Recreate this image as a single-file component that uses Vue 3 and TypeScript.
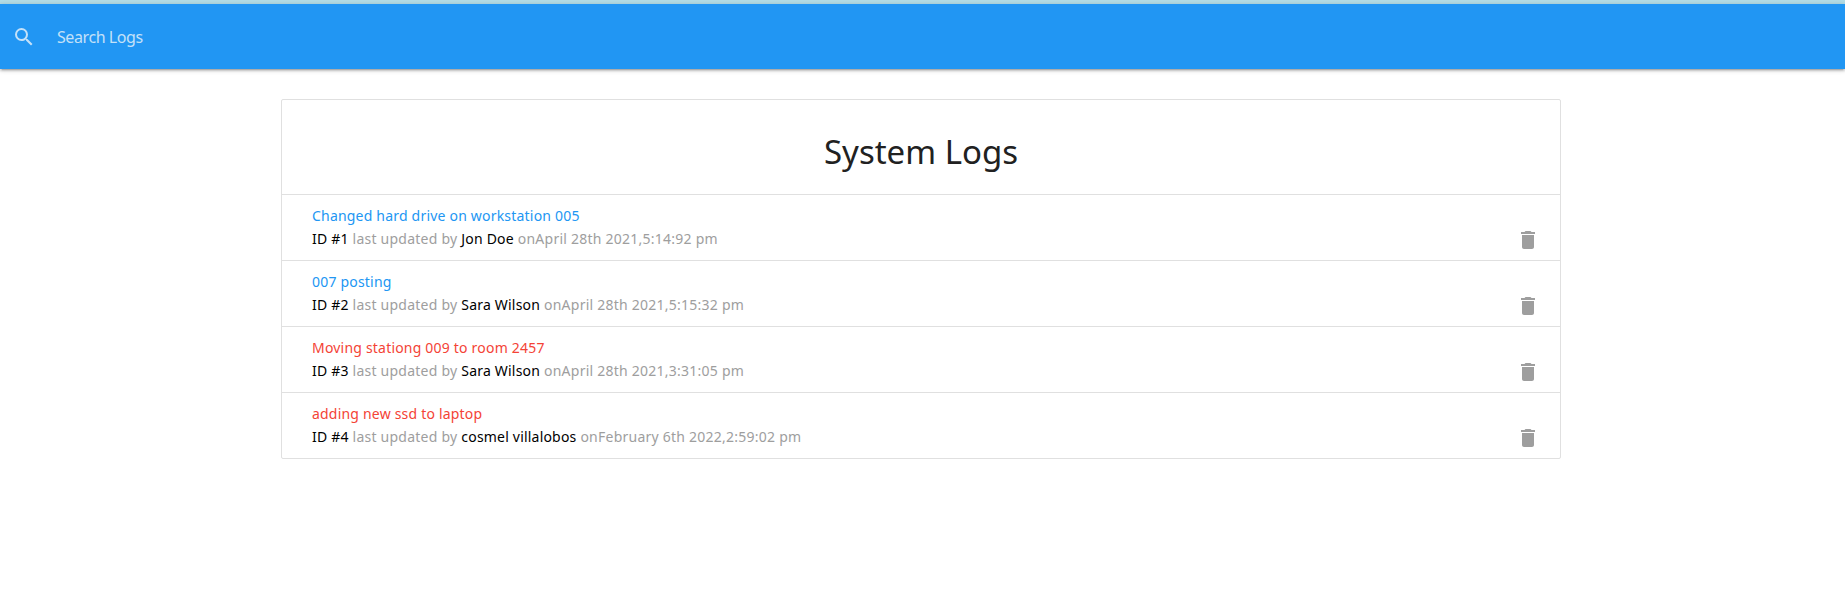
<script setup lang="ts">
interface Log { id: number; msg: string; attention: boolean; tech: string; date: string }
const logs: Log[] = [
  { id: 1, msg: 'Changed hard drive on workstation 005', attention: false, tech: 'Jon Doe', date: 'April 28th 2021,5:14:92 pm' },
  { id: 2, msg: '007 posting', attention: false, tech: 'Sara Wilson', date: 'April 28th 2021,5:15:32 pm' },
  { id: 3, msg: 'Moving stationg 009 to room 2457', attention: true, tech: 'Sara Wilson', date: 'April 28th 2021,3:31:05 pm' },
  { id: 4, msg: 'adding new ssd to laptop', attention: true, tech: 'cosmel villalobos', date: 'February 6th 2022,2:59:02 pm' },
]
</script>

<template>
  <div class="page">
    <div class="progress"></div>
    <nav class="nav">
      <svg class="search-icon" viewBox="0 0 24 24" width="24" height="24" aria-hidden="true">
        <path fill="currentColor" d="M15.5 14h-.79l-.28-.27A6.47 6.47 0 0 0 16 9.5 6.5 6.5 0 1 0 9.5 16c1.61 0 3.09-.59 4.23-1.57l.27.28v.79l5 4.99L20.49 19l-4.99-5zm-6 0C7.01 14 5 11.99 5 9.5S7.01 5 9.5 5 14 7.01 14 9.5 11.99 14 9.5 14z"/>
      </svg>
      <span class="search-text">Search Logs</span>
    </nav>
    <ul class="collection">
      <li class="header"><h4>System Logs</h4></li>
      <li v-for="log in logs" :key="log.id" class="item">
        <div class="text">
          <a class="title" :class="{ red: log.attention }">{{ log.msg }}</a>
          <div class="meta">
            <span class="dark">ID #{{ log.id }}</span> last updated by
            <span class="dark">{{ log.tech }}</span> on{{ log.date }}
          </div>
        </div>
        <svg class="trash" viewBox="0 0 24 24" width="24" height="24" aria-hidden="true">
          <path fill="currentColor" d="M6 19c0 1.1.9 2 2 2h8c1.1 0 2-.9 2-2V7H6v12zM19 4h-3.5l-1-1h-5l-1 1H5v2h14V4z"/>
        </svg>
      </li>
    </ul>
  </div>
</template>

<style>
html, body { margin: 0; background: #fff; }
</style>

<style scoped>
.page {
  font-family: "Noto Sans", "Open Sans", sans-serif;
  font-size: 14px;
  display: flex;
  flex-direction: column;
  min-height: 592px;
  box-sizing: border-box;
}
.progress { height: 4px; background: #b3dde6; }
.nav {
  height: 65px;
  background: #2196f3;
  display: flex;
  align-items: center;
  padding-left: 12px;
  color: #fff;
  box-shadow: 0 2px 2px 0 rgba(0,0,0,.14), 0 3px 1px -2px rgba(0,0,0,.12), 0 1px 5px 0 rgba(0,0,0,.2);
}
.search-icon { color: #c4e1f8; flex: none; }
.search-text { margin-left: 21px; font-size: 16px; color: #c4e1f8; letter-spacing: -0.42px; }
.collection {
  list-style: none;
  margin: 30px 0 0 281px;
  padding: 0;
  width: 1280px;
  box-sizing: border-box;
  border: 1px solid #e0e0e0;
  border-radius: 2px;
}
.header {
  height: 94px;
  box-sizing: content-box;
  display: flex;
  align-items: center;
  justify-content: center;
  border-bottom: 1px solid #e0e0e0;
}
.header h4 {
  margin: 9px 0 0;
  font-size: 33px;
  font-weight: 400;
  color: #212121;
}
.item {
  height: 66px;
  box-sizing: border-box;
  padding: 10px 20px 0 30px;
  border-bottom: 1px solid #e0e0e0;
  display: flex;
  justify-content: space-between;
  align-items: flex-start;
  line-height: 22px;
}
.item:last-child { border-bottom: 0; height: 65px; }
.text { display: flex; flex-direction: column; }
.title { color: #2196f3; letter-spacing: 0.2px; }
.title.red { color: #f44336; }
.meta { color: #9e9e9e; letter-spacing: 0.24px; margin-top: 1px; }
.dark { color: #000; letter-spacing: 0.2px; }
.trash { color: #9e9e9e; margin-top: 23px; flex: none; }
</style>
